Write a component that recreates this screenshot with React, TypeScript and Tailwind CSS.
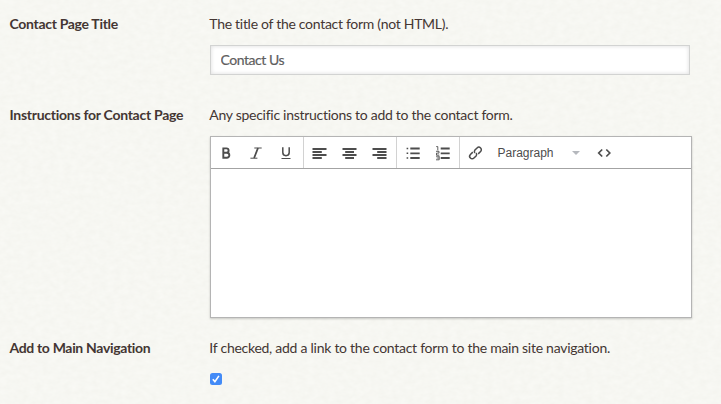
import type { ReactNode } from "react";

function PaperTexture() {
  return (
    <svg className="pointer-events-none absolute inset-0 h-full w-full" aria-hidden="true">
      <filter id="paper" x="0" y="0" width="100%" height="100%" colorInterpolationFilters="sRGB">
        <feTurbulence type="fractalNoise" baseFrequency="0.14 0.2" numOctaves="3" seed="8" />
        <feColorMatrix values="0.025 0 0 0 0.954  0.025 0 0 0 0.955  0.03 0 0 0 0.934  0 0 0 0 1" />
      </filter>
      <rect width="100%" height="100%" filter="url(#paper)" />
    </svg>
  );
}

function Tool({ label, children }: { label: string; children: ReactNode }) {
  return (
    <button aria-label={label} className="flex h-full w-[30px] items-center justify-center text-[#4d4d4d]">
      <svg width="16" height="16" viewBox="0 0 16 16" fill="none" stroke="currentColor">
        {children}
      </svg>
    </button>
  );
}

function Toolbar() {
  return (
    <div className="flex h-8 border-b border-[#a3a3a3] bg-white">
      <div className="flex border-r border-[#d2d2d2] pr-0.5">
        <Tool label="Bold">
          <path strokeWidth="1.9" d="M5.3 3.3v9.5M4.4 3.4h4a2.2 2.2 0 0 1 0 4.4H5M5 7.8h3.9a2.4 2.4 0 0 1 0 4.9H4.4" />
        </Tool>
        <Tool label="Italic">
          <path strokeWidth="1" d="M6.3 3h7.4M2.4 13.2h7" />
          <path strokeWidth="1.8" d="M10 3 6.1 13" />
        </Tool>
        <Tool label="Underline">
          <path strokeWidth="1.5" d="M4.8 2.3v5.3a3.2 3.1 0 0 0 6.4 0V2.3" />
          <path strokeWidth="1" d="M3.5 13.5h9" />
        </Tool>
      </div>
      <div className="flex border-r border-[#d2d2d2] pr-0.5">
        <Tool label="Align left">
          <path strokeWidth="1.8" d="M1.5 4h14M1.5 7h9.3M1.5 10h14M1.5 13h9.3" />
        </Tool>
        <Tool label="Align center">
          <path strokeWidth="1.8" d="M1.5 4h14M4.2 7h8.8M1.5 10h14M4.2 13h8.8" />
        </Tool>
        <Tool label="Align right">
          <path strokeWidth="1.8" d="M1.5 4h14M6.2 7h9.3M1.5 10h14M6.2 13h9.3" />
        </Tool>
      </div>
      <div className="flex border-r border-[#d2d2d2] pr-0.5">
        <Tool label="Bullet list">
          <path strokeWidth="1.8" d="M6.3 3.5h9.4M6.3 8.3h9.4M6.3 13h9.4" />
          <path strokeWidth="1.6" d="M2.6 3.5h1.6M2.6 8.3h1.6M2.6 13h1.6" />
        </Tool>
        <Tool label="Numbered list">
          <path strokeWidth="1.8" d="M6.7 3.5h9M6.7 8.3h9M6.7 13h9" />
          <path strokeWidth="0.9" d="M2.2 1.6h1.6v3.8M2 6.3h3v1.8H2.5v2H5.3M2 11.2h3.2v3.6H2M2.6 13h2.6" />
        </Tool>
      </div>
      <Tool label="Link">
        <g strokeWidth="1.5" transform="translate(.5 0) rotate(-45 8 8)">
          <path d="M6.7 5.5H3.3a2.3 2.3 0 0 0 0 5h3a2.3 2.3 0 0 0 2.1-2.1" />
          <path d="M9.3 10.5h3.4a2.3 2.3 0 0 0 0-5h-3a2.3 2.3 0 0 0-2.1 2.1" />
        </g>
      </Tool>
      <button className="flex w-[99px] items-center justify-between pl-[7.5px] pr-[9px] font-['Liberation_Sans',Arial,sans-serif] text-[12px] text-[#4d4d4d]">
        <span>Paragraph</span>
        <svg width="8" height="4" viewBox="0 0 8 4"><path fill="#b5b8bd" d="M0 0h8L4 4z" /></svg>
      </button>
      <Tool label="Source code">
        <path strokeWidth="1.7" d="M6.2 4.5 2.7 8l3.5 3.5M10.3 4.5 13.8 8l-3.5 3.5" />
      </Tool>
    </div>
  );
}

export default function App() {
  return (
    <main className="relative h-[404px] w-[721px] overflow-hidden bg-[#f6f6f1] font-['Lato',sans-serif] text-[14px] leading-5 text-[#443633]">
      <PaperTexture />
      <div className="relative pl-[10px] pt-[14px]">
        <section className="flex h-[91px]">
          <h2 className="-ml-[0.5px] w-[200px] shrink-0 whitespace-nowrap font-bold tracking-[-0.31px]">Contact Page Title</h2>
          <div className="pl-[0.5px]">
            <p className="-ml-[0.7px] whitespace-nowrap tracking-[-0.29px]">The title of the contact form (not HTML).</p>
            <input
              defaultValue="Contact Us"
              className="mt-[11px] block h-[30px] w-[480px] border border-[#d2d3d2] bg-white pb-px pl-[9.5px] pr-[10px] text-[14px] tracking-[-0.45px] text-[#5e5e5e] shadow-[inset_0_0_4px_#dcdcdc] outline-none [-webkit-text-stroke:0.2px_#5e5e5e]"
            />
          </div>
        </section>
        <section className="flex h-[233px]">
          <h2 className="-ml-[0.5px] w-[200px] shrink-0 whitespace-nowrap font-bold tracking-[-0.27px]">Instructions for Contact Page</h2>
          <div className="pl-[0.5px]">
            <p className="-ml-[0.7px] whitespace-nowrap tracking-[-0.28px]">Any specific instructions to add to the contact form.</p>
            <div className="mt-[11px] h-[182px] w-[482px] border border-[#b4b4b4] bg-white shadow-[0_1px_2px_rgba(0,0,0,0.2)]">
              <Toolbar />
            </div>
          </div>
        </section>
        <section className="flex">
          <h2 className="-ml-[0.5px] w-[200px] shrink-0 whitespace-nowrap font-bold tracking-[-0.33px]">Add to Main Navigation</h2>
          <div className="pl-[0.5px]">
            <p className="-ml-[0.7px] whitespace-nowrap tracking-[-0.265px]">If checked, add a link to the contact form to the main site navigation.</p>
            <button role="checkbox" aria-checked="true" aria-label="Add to Main Navigation" className="mt-[15px] flex h-3 w-3 items-center justify-center rounded-[2.5px] bg-[#438bf7]">
              <svg width="12" height="12" viewBox="0 0 12 12" fill="none" stroke="white" strokeWidth="1.6">
                <path d="m2.8 6.3 2.1 2.3 4-5.7" />
              </svg>
            </button>
          </div>
        </section>
      </div>
    </main>
  );
}
